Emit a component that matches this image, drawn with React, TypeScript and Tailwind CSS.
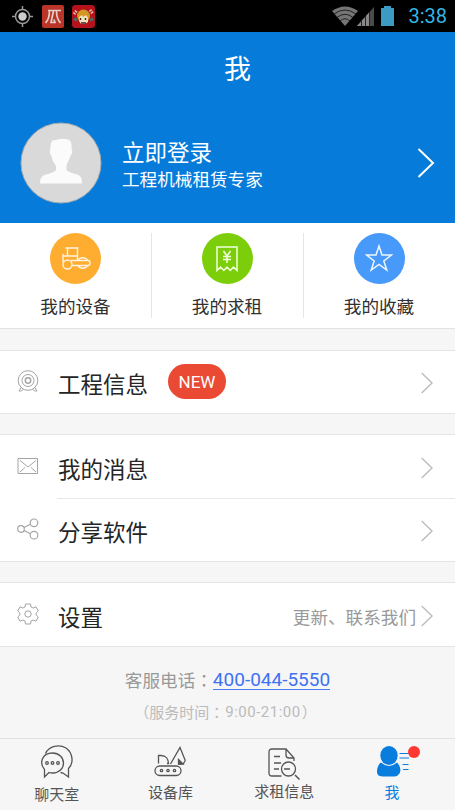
import type { ReactNode } from "react";

function StatusBar() {
  return (
    <div className="flex h-8 shrink-0 items-center bg-black pl-3 pr-2">
      <svg width="21" height="21" viewBox="0 0 21 21" fill="none" className="mr-[9px]">
        <circle cx="10.5" cy="10.5" r="7" stroke="#999" strokeWidth="1.5" />
        <circle cx="10.5" cy="10.5" r="4.2" fill="#ccc" />
        <path d="M10.5 0v4M10.5 17v4M0 10.5h4M17 10.5h4" stroke="#999" strokeWidth="1.5" />
      </svg>
      <svg width="22" height="23" viewBox="0 0 22 23" className="mr-2">
        <rect width="22" height="23" rx="2" fill="#ba3527" />
        <path d="M6 5.500h13M7.500 5.500C7.500 11 6.500 15 3.500 18M11.500 6L9 17.500h4l-1-3M14.500 6c0 6 1 9 4 12" stroke="#e2cfca" strokeWidth="1.700" fill="none" />
      </svg>
      <svg width="23" height="23" viewBox="0 0 23 23">
        <rect width="23" height="23" rx="3.500" fill="#b5121b" />
        <path d="M2 9l3-4M18 5l3 4" stroke="#d9c7b5" strokeWidth="3" strokeDasharray="1.500 1" />
        <path d="M2 13.500l3 2M21 13.500l-3 2" stroke="#426c69" strokeWidth="3" />
        <ellipse cx="11.500" cy="11" rx="6.500" ry="6.500" fill="#d29724" />
        <path d="M7 12l3-2 1 2 3-2 2 3v4l-3 2H9l-2-3z" fill="#f1dfc0" />
        <path d="M8.500 13v2M13.500 13v2M9 18h5" stroke="#40251b" strokeWidth="1.400" />
      </svg>
      <div className="ml-auto flex items-center">
        <svg width="26" height="20" viewBox="0 0 26 20" fill="none" className="-mr-px">
          <path d="M0 5Q13-4 26 5L13 20z" fill="#757575" />
          <path d="M2 8Q13 0 24 8M5 11.500Q13 5 21 11.500M8 15Q13 10.500 18 15" stroke="#222" strokeWidth="1" />
        </svg>
        <svg width="17" height="19" viewBox="0 0 17 19" className="mr-[7px]">
          <path d="M0 19L17 0v19z" fill="#4b4b4b" />
          <path d="M0 19L12 5.600V19z" fill="#888" />
          <path d="M4.500 13v6M8.500 9v10M12.500 5v14" stroke="#242424" />
        </svg>
        <svg width="13" height="20" viewBox="0 0 13 20" className="mr-[14px]">
          <path d="M0 2h3V0h7v2h3v18H0z" fill="#3b9bc3" />
        </svg>
        <span className="font-['Roboto',sans-serif] text-[20px] leading-8 text-[#33b5e5]">3:38</span>
      </div>
    </div>
  );
}

function Chevron({ large = false }: { large?: boolean }) {
  return large ? (
    <svg width="18" height="30" viewBox="0 0 18 30" fill="none">
      <path d="M1.500 1L16 15 1.500 29" stroke="#fff" strokeWidth="2" />
    </svg>
  ) : (
    <svg width="12" height="22" viewBox="0 0 12 22" fill="none">
      <path d="M.700 1L11 11 .700 21" stroke="#bcbcbc" strokeWidth="1.400" />
    </svg>
  );
}

function Header() {
  return (
    <header className="flex h-[191px] shrink-0 flex-col bg-[#067bd9] text-white">
      <h1 className="mt-4 pl-5 text-center text-[27px] leading-10">我</h1>
      <div className="flex flex-1 items-center pl-[19.5px] pr-5 pt-[14px]">
        <svg width="82" height="82" viewBox="0 0 82 82">
          <circle cx="41" cy="41" r="40" fill="#d9d9d9" stroke="#a5adb2" />
          <path d="M32 18l2 .500q8-3 14-1c3 1 4 4 3.500 9.500 1.500 1 .500 5-1 7-1 4-4 7-4 11v3c3 3 8 3.500 12 5 3 2 3.500 4 3.500 8.500H20c0-6 2-8 6-9 4-1 8-2 10-4.500v-4c-2-3-4-6-4.500-10-2-2-2-6-1-7-.500-4 .500-7 2-8z" fill="#fbfbfb" />
        </svg>
        <div className="ml-[20.5px] pt-[3px]">
          <div className="text-[22.5px] leading-[28px]">立即登录</div>
          <div className="text-[17.6px] leading-[27px]">工程机械租赁专家</div>
        </div>
        <div className="ml-auto"><Chevron large /></div>
      </div>
    </header>
  );
}

function RollerIcon() {
  return (
    <svg width="29" height="24" viewBox="0 0 29 24" fill="none" stroke="#fff3df" strokeWidth="1.400" className="ml-[2px]">
      <path d="M3.500 1h13M5.500 1v7.500M15.500 1v12M1 15V7M1 9h14.500" />
      <circle cx="5.500" cy="17.500" r="4.500" />
      <path d="M9 13.500h17q2 0 2 2.500t-2 2.500H10" />
      <path d="M15.800 13.500a6 6 0 0 1 10 0M15.800 18.500a6 6 0 0 0 10 0" />
    </svg>
  );
}

function ReceiptIcon() {
  return (
    <svg width="22" height="26" viewBox="0 0 22 26" fill="none" stroke="#f1ffe0" strokeWidth="1.500" className="mr-px">
      <path d="M1 1h20v23.500L17.500 21l-3.200 3.500L11 21l-3.200 3.500L4.500 21 1 24.500z" />
      <path d="M7.500 5l3.500 5 3.500-5M11 10v7M7 10.500h8M7 13.500h8" />
    </svg>
  );
}

function StarIcon() {
  return (
    <svg width="28" height="28" viewBox="0 0 28 28" fill="none" stroke="#eef7ff" strokeWidth="1.500" className="mb-px mr-px">
      <path d="M14 2l3 9h9.500l-7.700 6 3 9L14 20.500 6.200 26l3-9-7.700-6H11z" />
    </svg>
  );
}

function Shortcuts() {
  const items: { label: string; color: string; icon: ReactNode }[] = [
    { label: "我的设备", color: "bg-[#ffad30]", icon: <RollerIcon /> },
    { label: "我的求租", color: "bg-[#7dce0a]", icon: <ReceiptIcon /> },
    { label: "我的收藏", color: "bg-[#4799fa]", icon: <StarIcon /> },
  ];
  return (
    <section className="grid h-[106px] shrink-0 grid-cols-[151px_152px_152px] border-b border-[#e2e2e2] bg-white pb-2.5 pt-2.5">
      {items.map((item, i) => (
        <div key={item.label} className={`flex flex-col items-center ${i ? "border-l border-[#e5e5e5] pr-px" : ""}`}>
          <div className={`flex size-[51px] items-center justify-center rounded-full ${item.color}`}>{item.icon}</div>
          <div className="mt-[10px] text-[17.6px] leading-6 text-[#303030]">{item.label}</div>
        </div>
      ))}
    </section>
  );
}

const TargetIcon = () => (
  <svg width="22" height="22" viewBox="0 0 22 22" fill="none" stroke="#a4a4a4">
    <circle cx="11" cy="10.500" r="9.800" /><circle cx="11" cy="10.500" r="6" /><circle cx="11" cy="10.500" r="2.700" strokeWidth="1.500" />
    <path d="M4 17.500l-2 3.500h2.500l2-2M18 17.500l2 3.500h-2.500l-2-2" />
  </svg>
);

const MailIcon = () => (
  <svg width="22" height="18" viewBox="0 0 22 18" fill="none" stroke="#a4a4a4">
    <path d="M1 1.500h19.500v15H1zM3 3.500l8 6.500 8-6.500M3 15l5-4.500M19 15l-5-4.500" />
  </svg>
);

const ShareIcon = () => (
  <svg width="22" height="22" viewBox="0 0 22 22" fill="none" stroke="#a4a4a4" strokeWidth="1.200">
    <circle cx="4" cy="11" r="3.300" /><circle cx="17" cy="4.800" r="3.800" /><circle cx="17" cy="17.200" r="3.800" />
    <path d="M7 9.500l6.500-3.300M7 12.500l6.500 3.300" />
  </svg>
);

const GearIcon = () => (
  <svg width="22" height="22" viewBox="0 0 22 22" fill="none" stroke="#a4a4a4" strokeLinejoin="round">
    <path d="M8.500 1h5l.500 3 2 1 3-1.200L21.300 8l-2.200 2v2l2.200 2-2.300 4.200-3-1.200-2 1-.500 3h-5L8 18l-2-1-3 1.200L.700 14l2.200-2v-2L.700 8 3 3.800 6 5l2-1z" />
    <circle cx="11" cy="11" r="3.200" />
  </svg>
);

function Row({ icon, label, badge, hint }: { icon: ReactNode; label: string; badge?: string; hint?: string }) {
  return (
    <div className="flex h-[62px] items-center pl-[17px] pr-[22px]">
      <div className="mb-[2px] flex w-[22px] shrink-0 justify-center">{icon}</div>
      <span className="ml-[19px] mt-0.5 text-[22.5px] leading-8 text-[#252525]">{label}</span>
      {badge && (
        <span className="mb-px ml-5 flex h-[35px] w-[58px] items-center justify-center rounded-full bg-[#ea4933] pt-0.5 font-['Roboto',sans-serif] text-[17px] text-white">{badge}</span>
      )}
      <div className="ml-auto flex items-center gap-[5px] pt-[2px]">
        {hint && <span className="mt-px text-[17.6px] leading-6 text-[#999]">{hint}</span>}
        <Chevron />
      </div>
    </div>
  );
}

function Group({ children }: { children: ReactNode }) {
  return <section className="mt-5 shrink-0 border-y border-[#e4e4e4] bg-white">{children}</section>;
}

const ChatIcon = () => (
  <svg width="34" height="34" viewBox="0 0 34 34" fill="none" stroke="#555" strokeWidth="1.300">
    <path d="M5.500 8.500C9 1 19-1 26 3c7 5 8 15 2.500 20.500V32L23 28l-2.500-.500" />
    <path d="M12.500 8C19 8 23.500 12.500 23.500 18S19 28 13 28q-2.500 0-4-.500L4.500 32v-7.500C-1 18 2 8 12.500 8z" />
    <circle cx="7" cy="18" r="1.300" /><circle cx="12.500" cy="18" r="1.300" /><circle cx="18" cy="18" r="1.300" />
  </svg>
);

const ExcavatorIcon = () => (
  <svg width="34" height="32" viewBox="0 0 34 32" fill="none" stroke="#555" strokeWidth="1.300">
    <rect x="1" y="20" width="26" height="9.500" rx="4.750" />
    <path d="M4.500 17.500V9.500h2.500c5 0 7.500 3.500 7.500 8H13M16.500 18L26 1.500l5.200 12.700c-.500 2.500-2 3.800-4 3.800h-2.700" />
    <path d="M24.500 13.500l4.500 4.500h-4.500z" fill="#555" />
    <circle cx="7.500" cy="24.500" r="1.200" /><circle cx="14" cy="24.500" r="1.200" /><circle cx="20.500" cy="24.500" r="1.200" />
  </svg>
);

const SearchDocIcon = () => (
  <svg width="32" height="32" viewBox="0 0 32 32" fill="none" stroke="#555" strokeWidth="1.300">
    <path d="M13.500 28H4q-3 0-3-3V4q0-3 3-3h14l8 9v3M18 1v6q0 3 3 3h5M6 8.500h6M6 15h7M6 21h5" />
    <circle cx="20.500" cy="21" r="7" /><path d="M16 21h6M27 27l4.500 4.500" strokeWidth="1.500" />
  </svg>
);

const PersonIcon = () => (
  <svg width="33" height="32" viewBox="0 0 33 32" fill="#087dde">
    <ellipse cx="12" cy="9.500" rx="8.700" ry="9.500" />
    <path d="M4 16.500q8 7 16 0c3 3 4.500 8 2.500 11q-2 3-5 3h-11Q0 30.500 0 26C0 21.500 2 17.500 4 16.500z" />
    <path d="M22.500 7.500h9.500M22.500 12h9.500M25.500 18.500h6M26 23.500h5.500" stroke="#087dde" strokeWidth="1.200" />
  </svg>
);

function TabBar() {
  return (
    <nav className="grid h-[72px] shrink-0 grid-cols-4 border-t border-[#e1e1e1] bg-[#f6f6f6] text-[15px] leading-5 text-[#555]">
      <div className="flex flex-col items-center pt-[6px]"><ChatIcon /><span className="mt-[5px]">聊天室</span></div>
      <div className="flex flex-col items-center pt-[7px]"><ExcavatorIcon /><span className="mt-1">设备库</span></div>
      <div className="flex flex-col items-center pt-[9px]"><SearchDocIcon /><span className="mt-px">求租信息</span></div>
      <div className="flex flex-col items-center pr-[12px] pt-[7px] text-[#087dde]">
        <div className="relative ml-[2px]">
          <PersonIcon />
          <i className="absolute -right-[10px] top-0 size-[12px] rounded-full bg-[#ff3830]" />
        </div>
        <span className="mt-1">我</span>
      </div>
    </nav>
  );
}

export default function App() {
  return (
    <main lang="zh-CN" className="flex h-[810px] w-[455px] flex-col overflow-hidden bg-[#f6f6f6] font-['Noto_Sans_CJK_SC',sans-serif]">
      <StatusBar />
      <Header />
      <Shortcuts />
      <div className="h-px shrink-0" />
      <Group>
        <Row icon={<TargetIcon />} label="工程信息" badge="NEW" />
      </Group>
      <Group>
        <div className="pt-px">
          <Row icon={<MailIcon />} label="我的消息" />
        </div>
        <div className="ml-[57px] h-px bg-[#e8e8e8]" />
        <Row icon={<ShareIcon />} label="分享软件" />
      </Group>
      <Group>
        <div className="pt-px">
          <Row icon={<GearIcon />} label="设置" hint="更新、联系我们" />
        </div>
      </Group>
      <footer lang="zh-TW" className="flex flex-1 flex-col items-center pt-[19px] font-['Noto_Sans_CJK_TC',sans-serif] text-[#999]">
        <div className="flex items-center text-[17.6px] leading-7">
          <span><span lang="zh-CN" className="font-['Noto_Sans_CJK_SC',sans-serif]">客服电话</span>：</span>
          <a className="mt-px border-b border-[#4b7df0] font-['Roboto',sans-serif] text-[19px] leading-[18px] text-[#3f72f0]">400-044-5550</a>
        </div>
        <div className="mt-[6px] flex pr-1 text-[15px] leading-6 text-[#bbb]">
          <span className="w-3"><span className="-ml-[3px]">（</span></span>
          <span lang="zh-CN" className="font-['Noto_Sans_CJK_SC',sans-serif]">服务时间</span>
          <span>：</span>
          <span className="ml-px font-['Roboto',sans-serif] tracking-[0.5px]">9:00-21:00</span>
          <span className="ml-px w-3">）</span>
        </div>
      </footer>
      <TabBar />
    </main>
  );
}
